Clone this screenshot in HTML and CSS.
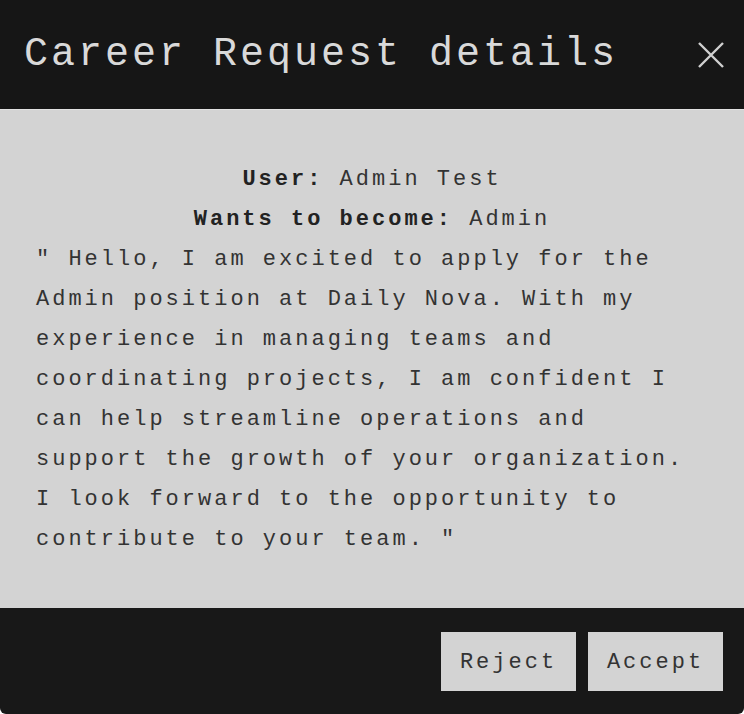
FILE: index.html
```html
<!DOCTYPE html>
<html>
<head>
<meta charset="utf-8">
<link rel="stylesheet" href="styles.css">
</head>
<body>
<div class="modal">
  <header class="modal-header">
    <h1 class="modal-title">Career Request details</h1>
    <button class="close-btn" aria-label="Close">
      <svg width="26" height="26" viewBox="0 0 26 26"><path d="M1 1 L25 25 M25 1 L1 25" stroke="#d0d0d0" stroke-width="2.4" fill="none"/></svg>
    </button>
  </header>
  <section class="modal-body">
    <p class="meta"><b>User:</b> Admin Test</p>
    <p class="meta"><b>Wants to become:</b> Admin</p>
    <p class="message">" Hello, I am excited to apply for the Admin position at Daily Nova. With my experience in managing teams and coordinating projects, I am confident I can help streamline operations and support the growth of your organization. I look forward to the opportunity to contribute to your team. "</p>
  </section>
  <footer class="modal-footer">
    <button class="action-btn">Reject</button>
    <button class="action-btn">Accept</button>
  </footer>
</div>
</body>
</html>
```
FILE: styles.css
```css
html, body {
  margin: 0;
  padding: 0;
  background: #ffffff;
}
body {
  font-family: "Courier New", "Liberation Mono", monospace;
}
.modal {
  width: 744px;
  height: 714px;
  display: flex;
  flex-direction: column;
  border-radius: 0 0 6px 6px;
  overflow: hidden;
}
.modal-header {
  background: #161616;
  height: 110px;
  flex: none;
  box-sizing: border-box;
  padding: 0 20px 0 24px;
  display: flex;
  align-items: center;
  justify-content: space-between;
  border-bottom: 1px solid #e2e2e2;
}
.modal-title {
  margin: 0;
  font-weight: normal;
  font-size: 40px;
  letter-spacing: 3px;
  color: #d9d9d9;
}
.close-btn {
  background: none;
  border: 0;
  padding: 0;
  width: 26px;
  height: 26px;
  display: flex;
  cursor: pointer;
}
.modal-body {
  background: #d3d3d3;
  flex: 1;
  padding: 50px 36px 0 36px;
  color: #333333;
  font-size: 22px;
  line-height: 40px;
  letter-spacing: 3px;
}
.modal-body p {
  margin: 0;
}
.meta {
  text-align: center;
}
.meta b {
  font-weight: bold;
  color: #222222;
}
.modal-footer {
  background: #181818;
  height: 106px;
  flex: none;
  box-sizing: border-box;
  padding: 0 21px 0 0;
  display: flex;
  justify-content: flex-end;
  align-items: center;
  gap: 12px;
}
.action-btn {
  background: #d3d3d3;
  border: 0;
  width: 135px;
  height: 59px;
  font-family: "Courier New", "Liberation Mono", monospace;
  font-size: 22px;
  letter-spacing: 3px;
  color: #333333;
  padding: 2px 0 0 0;
}
```
